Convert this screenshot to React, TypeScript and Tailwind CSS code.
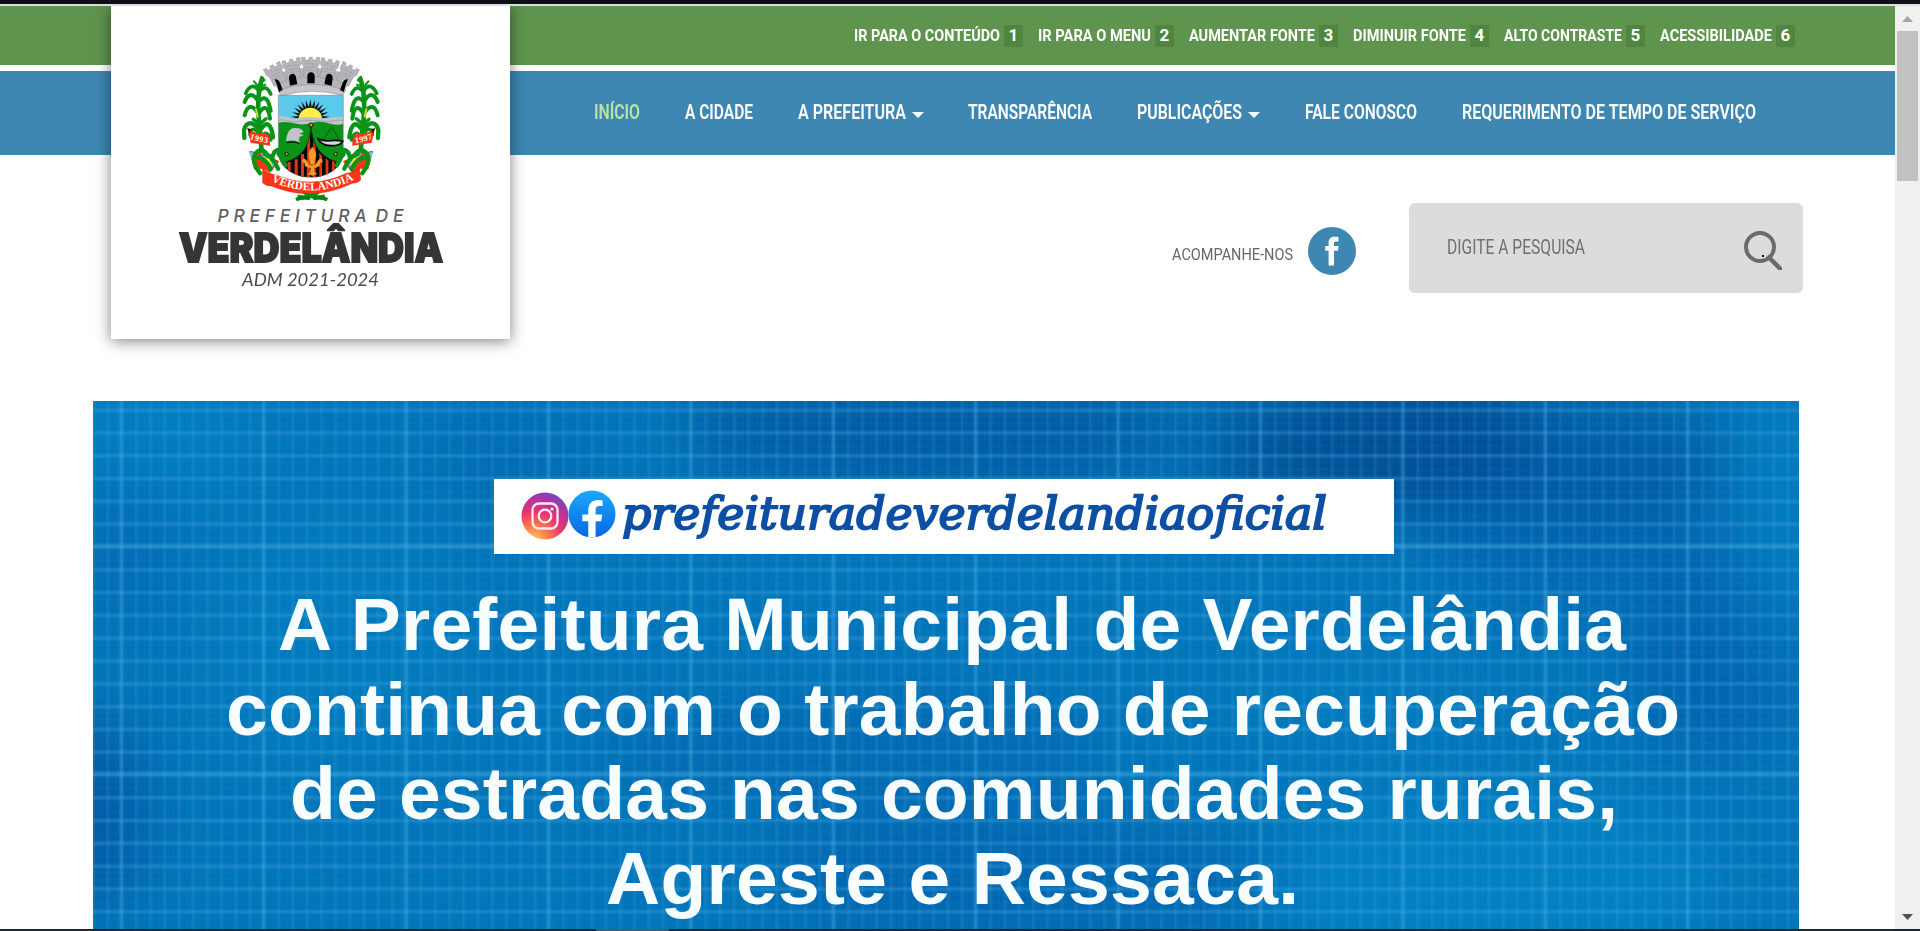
import { useLayoutEffect, useRef } from "react";

type FitProps = { text: string; className: string; mode?: "scale" | "track" };

/** One line of text fitted to the width of its box, by condensing or by tracking. */
function Fit({ text, className, mode = "scale" }: FitProps) {
  const outer = useRef<HTMLSpanElement>(null);
  const inner = useRef<HTMLSpanElement>(null);
  useLayoutEffect(() => {
    const o = outer.current;
    const i = inner.current;
    if (!o || !i) return;
    i.style.transform = "none";
    i.style.letterSpacing = "0px";
    const natural = i.getBoundingClientRect().width;
    const wanted = o.getBoundingClientRect().width;
    if (mode === "scale") i.style.transform = `scaleX(${wanted / natural})`;
    else i.style.letterSpacing = `${(wanted - natural) / (text.length - 1)}px`;
  }, [text, mode]);
  return (
    <span ref={outer} className={`block shrink-0 whitespace-nowrap ${className}`}>
      <span ref={inner} className="inline-block origin-left">
        {text}
      </span>
    </span>
  );
}

const shortcuts = [
  { label: "IR PARA O CONTEÚDO", key: "1", w: "w-[146px]" },
  { label: "IR PARA O MENU", key: "2", w: "w-[113px]" },
  { label: "AUMENTAR FONTE", key: "3", w: "w-[126px]" },
  { label: "DIMINUIR FONTE", key: "4", w: "w-[113px]" },
  { label: "ALTO CONTRASTE", key: "5", w: "w-[118px]" },
  { label: "ACESSIBILIDADE", key: "6", w: "w-[112px]" },
];

const menu = [
  { label: "INÍCIO", w: "w-[46px]", active: true },
  { label: "A CIDADE", w: "w-[68px]" },
  { label: "A PREFEITURA", w: "w-[108px]", caret: true },
  { label: "TRANSPARÊNCIA", w: "w-[124px]" },
  { label: "PUBLICAÇÕES", w: "w-[105px]", caret: true },
  { label: "FALE CONOSCO", w: "w-[112px]" },
  { label: "REQUERIMENTO DE TEMPO DE SERVIÇO", w: "w-[294px]" },
];

function TopBar() {
  return (
    <div className="flex h-[59px] items-center justify-end gap-[15px] bg-[#5e944d] pt-px pr-[100px] text-[17px] font-bold text-white">
      {shortcuts.map((s) => (
        <a key={s.key} className="flex items-center gap-1">
          <Fit text={s.label} className={s.w} />
          <span className="flex h-[22px] w-[19px] items-center justify-center bg-[#508540]">{s.key}</span>
        </a>
      ))}
    </div>
  );
}

function MainMenu() {
  return (
    <nav className="flex h-[84px] items-center gap-[44.8px] bg-[#3d87b2] pb-px pl-[594px] text-[19.5px] font-semibold text-white">
      {menu.map((m) => (
        <a key={m.label} className={m.active ? "flex items-center text-[#b9e4a3]" : "flex items-center"}>
          <Fit text={m.label} className={m.w} />
          {m.caret && (
            <svg viewBox="0 0 12 6" className="mt-[5px] ml-[6px] h-[6px] w-[12px]">
              <path d="M0 0h12L6 6z" fill="#fff" />
            </svg>
          )}
        </a>
      ))}
    </nav>
  );
}

function Stalk() {
  return (
    <g fill="none" stroke="#0a9417" strokeLinecap="round" strokeLinejoin="round">
      <path d="M96 116C84 150 82 200 88 255S92 320 98 350" strokeWidth="14" />
      <path d="M86 152C72 130 58 138 47 160M90 152C104 136 114 144 122 162" strokeWidth="11" />
      <path d="M82 180C66 156 52 164 44 186M86 184C108 162 116 182 122 212" strokeWidth="12" />
      <path d="M82 216C64 190 50 200 44 226M88 218C104 192 116 204 120 236" strokeWidth="12" />
      <path d="M84 266C66 242 48 246 42 270L43 294M92 268C110 240 124 252 129 292" strokeWidth="13" />
      <path d="M88 287C76 260 62 264 60 284M96 290C106 272 118 282 122 300" strokeWidth="11" />
      <path d="M84 250L70 238M92 250L108 236" strokeWidth="10" />
      <path d="M82 136l-10-12M92 126l12-6M90 140l16-6M96 116l-2-6" strokeWidth="6" />
      <path d="M78 208l5 22" stroke="#c9d83c" strokeWidth="6" />
    </g>
  );
}

function LowerLeaves() {
  return (
    <g>
      <path d="M58 332L98 340 148 364 120 398 98 386 72 388z" fill="#ff3415" />
      <path d="M56 334l14 4 10 20-16-4zM92 338l36 4 8 32-20 16z" fill="#5fc5ea" />
      <path d="M102 344l18 12 6 20-12-2z" fill="#ffe23a" />
      <path
        d="M90 400C68 370 66 348 84 334 96 326 108 334 112 348M104 342C128 348 138 372 144 386M126 358C130 336 136 328 148 330M80 352C98 354 114 366 122 388M146 342C158 352 158 366 167 376"
        fill="none"
        stroke="#0a9417"
        strokeWidth="13"
        strokeLinecap="round"
      />
    </g>
  );
}

const rays = [-84, -70, -56, -42, -28, -14, 0, 14, 28, 42, 56, 70, 84];
const towers = [
  { x: 132, y: 92, r: -27 },
  { x: 186, y: 75, r: -12 },
  { x: 242, y: 69, r: 0 },
  { x: 298, y: 75, r: 12 },
  { x: 356, y: 92, r: 27 },
];

function CoatOfArms() {
  return (
    <svg viewBox="0 0 480 492" className="mt-[34px] -ml-[2px] h-[164px] w-[160px] shrink-0">
      <defs>
        <clipPath id="shield">
          <path d="M145 166H340V345C332 385 292 412 243 412S153 385 145 345z" />
        </clipPath>
        <path id="nameArc" d="M118 421Q247 483 376 417" />
        <path id="yearLeft" d="M56 296Q84 306 118 310" />
        <path id="yearRight" d="M376 310Q405 306 432 294" />
      </defs>

      <path d="M120 108Q243 58 368 108L338 164Q243 138 154 166z" fill="#b5b5bb" />
      {towers.map((t) => (
        <g key={t.x} transform={`translate(${t.x} ${t.y}) rotate(${t.r})`}>
          <path d="M-27-17h10v8h12v-8h10v8h12v-8h10v19l-6 8V42h-42V10l-6-8z" fill="#b5b5bb" stroke="#8d8d95" strokeWidth="1.5" />
          <path d="M-18 2h36M-14 12h28M-18 22h36M-8-6v8M8 2v10M-4 12v10" stroke="#8d8d95" strokeWidth="1.5" strokeDasharray="5 3" />
        </g>
      ))}
      <path d="M145 150Q243 116 347 150L338 166Q243 140 152 168z" fill="#c5c5ca" stroke="#8d8d95" strokeWidth="2" />
      <g fill="#000">
        <path d="M134 118q10-2 16 10l8 22-11 6q-6-24-13-38z" />
        <path d="M180 137l-3-23q0-10 8-12t12 6l5 24z" />
        <path d="M232 130v-22q1-11 11-11t11 11v22z" />
        <path d="M305 137l3-23q0-10-8-12t-12 6l-5 24z" />
        <path d="M354 118q-10-2-16 10l-8 22 11 6q6-24 13-38z" />
      </g>

      <g clipPath="url(#shield)">
        <rect x="140" y="160" width="210" height="260" fill="#5bcaea" />
        {rays.map((a) => (
          <path key={a} d="M-5-30L0-58 5-30z" fill="#111" transform={`translate(241 236) rotate(${a})`} />
        ))}
        <circle cx="241" cy="238" r="35" fill="#fff04a" />
        <path d="M140 232q16-6 32 0t34 2 36-3 36 3 34-2 32 0v30H140z" fill="#c3c3c9" />
        <path d="M140 242q16-6 32 0t34 2 36-3 36 3 34-2 32 0" fill="none" stroke="#92929b" strokeWidth="2" />
        <path d="M140 249q26-6 52 1t52-1 52 1 52-1v175H140z" fill="#0a9417" />
        <path d="M243 256C240 320 212 362 150 368V420H340V368C278 362 248 320 243 256z" fill="#0a0a0a" />
        <path
          d="M173 366h9v50h-9zM194 358h9v60h-9zM213 342h9v76h-9zM232 312l8-30v134h-10zM250 300l7 20v96h-9zM268 338l8 10v70h-8zM287 356l8 4v56h-8zM306 364h8v50h-8z"
          fill="#e8321b"
        />
        <path d="M243 256C240 320 212 362 150 368M243 256C246 320 278 362 340 368" fill="none" stroke="#063d0a" strokeWidth="2" />
      </g>
      <path d="M145 166H340V345C332 385 292 412 243 412S153 385 145 345z" fill="none" stroke="#666" strokeWidth="1.5" />
      <circle cx="243" cy="255" r="6" fill="#d9a21b" stroke="#111" strokeWidth="3" />
      <circle cx="170" cy="342" r="5" fill="#c7b42a" stroke="#111" strokeWidth="3" />
      <circle cx="317" cy="342" r="5" fill="#c7b42a" stroke="#111" strokeWidth="3" />

      <path d="M168 304Q172 262 196 264 216 264 221 276L208 281 222 285 210 290Q204 296 210 308 192 298 168 304z" fill="#c3c3c9" />
      <path d="M170 308q20-6 38 2" fill="none" stroke="#111" strokeWidth="4" />
      <path d="M305 260L278 302M305 260L328 300" stroke="#12350f" strokeWidth="2" />
      <path d="M264 296q16 8 38 6t36 2q-8 14-36 13-30-1-38-21z" fill="#d7d7db" stroke="#000" strokeWidth="5" />

      <g fill="#f79a26">
        <path d="M247 320q16 18 10 34-4 10-4 20h-12q0-10-4-20-6-16 10-34z" />
        <path d="M238 374Q218 340 216 368q6-6 8 4-2 10 16 10zM256 374Q276 340 278 368q-6-6-8 4 2 10-16 10z" />
        <path d="M234 376h26v7h-26zM242 383h10l2 14 8 4-15 6-14-6 7-4z" />
      </g>

      <Stalk />
      <g transform="translate(487 0) scale(-1 1)">
        <Stalk />
      </g>
      <LowerLeaves />
      <g transform="translate(487 0) scale(-1 1)">
        <LowerLeaves />
      </g>
      <path d="M52 264Q78 286 104 278 122 282 120 318L112 316Q84 312 62 308z" fill="#ff3415" />
      <path d="M435 264Q409 286 383 278 365 282 367 318L375 316Q403 312 425 308z" fill="#ff3415" />
      <path d="M52 264l12 4-6 14zM435 264l-12 4 6 14z" fill="#3b0d0d" />

      <path d="M202 470Q243 480 276 444M285 470Q243 480 210 444" fill="none" stroke="#0a9417" strokeWidth="13" />
      <path d="M198 479q18-9 42-4M292 479q-18-9-42-4" fill="none" stroke="#078012" strokeWidth="11" />
      <path d="M98 384Q108 400 136 404 244 450 350 400 378 396 388 382L392 420Q382 430 366 430 246 488 124 438 108 438 98 428z" fill="#ff3415" stroke="#c5240d" strokeWidth="1.5" />

      <g fill="#fff" fontFamily="'Liberation Serif', serif" fontWeight="bold">
        <text fontSize="35">
          <textPath href="#nameArc" textLength="258" lengthAdjust="spacingAndGlyphs" startOffset="6">
            VERDELÂNDIA
          </textPath>
        </text>
        <text fontSize="25">
          <textPath href="#yearLeft" textLength="56" startOffset="3">1993</textPath>
        </text>
        <text fontSize="25">
          <textPath href="#yearRight" textLength="54">1997</textPath>
        </text>
      </g>
    </svg>
  );
}

function LogoCard() {
  return (
    <div className="absolute top-0 left-[111px] flex h-[333px] w-[399px] flex-col items-center bg-white shadow-[0_2px_14px_rgba(0,0,0,0.5)]">
      <CoatOfArms />
      <Fit
        text="PREFEITURA DE"
        mode="track"
        className="mt-[2px] w-[186px] font-['Inter',sans-serif] text-[17.5px] leading-[19px] font-medium text-[#606060] italic [word-spacing:-5px]"
      />
      <Fit
        text="VERDELÂNDIA"
        className="mt-[3px] w-[264px] font-['Inter',sans-serif] text-[40px] leading-[40px] font-black text-[#373435] [-webkit-text-stroke:1.8px_#373435]"
      />
      <Fit text="ADM 2021-2024" className="mt-[1px] w-[137px] font-['Lato',sans-serif] text-[18px] leading-[20px] text-[#4a4a4a] italic" />
    </div>
  );
}

function FacebookBadge() {
  return (
    <svg viewBox="0 0 48 48" className="h-12 w-12">
      <circle cx="24" cy="24" r="24" fill="#3d87b2" />
      <path d="M20.600 38.600V23.800h-3.400v-4.900h3.400v-3.200c0-3.900 2.300-5.900 5.900-5.900h4v4.700h-2.600c-1.500 0-1.900.7-1.900 2v2.400h4.500l-.5 4.900h-4v14.800z" fill="#fff" />
    </svg>
  );
}

function SearchRow() {
  return (
    <div className="flex h-[246px] items-start pt-[48px] pl-[1172px]">
      <div className="flex items-center gap-[15px] pt-6">
        <Fit text="ACOMPANHE-NOS" className="mt-[6px] w-[121px] text-[17px] leading-5 text-[#666]" />
        <FacebookBadge />
      </div>
      <label className="ml-[53px] flex h-[90px] w-[394px] items-center justify-between rounded-[6px] bg-[#dddbdc] pr-[21px] pl-[38px]">
        <Fit text="DIGITE A PESQUISA" className="w-[138px] text-[19.5px] text-[#707070]" />
        <svg viewBox="0 0 38 39" className="mt-[4px] h-[39px] w-[38px]" fill="none" stroke="#6b6b6b">
          <circle cx="16" cy="16" r="14" strokeWidth="4" />
          <path d="M25 26.500L36 37.500" strokeWidth="4.500" strokeLinecap="round" />
          <path d="M18 24h2v2h-2z" fill="#111" stroke="none" />
        </svg>
      </label>
    </div>
  );
}

const blotches = [
  { x: 420, y: 60, rx: 90, ry: 60, c: "#0a62ab", o: 0.5 },
  { x: 840, y: 30, rx: 260, ry: 60, c: "#004a95", o: 0.65 },
  { x: 1170, y: 50, rx: 60, ry: 70, c: "#003f86", o: 0.6 },
  { x: 1320, y: 40, rx: 130, ry: 80, c: "#003f86", o: 0.75 },
  { x: 1480, y: 60, rx: 160, ry: 70, c: "#004a95", o: 0.6 },
  { x: 30, y: 140, rx: 40, ry: 90, c: "#0460ad", o: 0.6 },
  { x: 0, y: 410, rx: 60, ry: 100, c: "#004f9f", o: 0.75 },
  { x: 760, y: 350, rx: 260, ry: 60, c: "#0457a6", o: 0.4 },
  { x: 920, y: 480, rx: 260, ry: 70, c: "#0457a6", o: 0.5 },
  { x: 1620, y: 260, rx: 90, ry: 110, c: "#0457a6", o: 0.55 },
  { x: 1480, y: 130, rx: 150, ry: 80, c: "#0457a6", o: 0.45 },
  { x: 60, y: 30, rx: 100, ry: 70, c: "#1492d2", o: 0.3 },
  { x: 240, y: 250, rx: 120, ry: 120, c: "#0a88c8", o: 0.3 },
  { x: 1400, y: 480, rx: 220, ry: 90, c: "#0a90d0", o: 0.4 },
  { x: 1685, y: 120, rx: 30, ry: 160, c: "#1492d2", o: 0.3 },
  { x: 1260, y: 300, rx: 120, ry: 40, c: "#1288c6", o: 0.3 },
];

function Blueprint() {
  return (
    <svg viewBox="0 0 1706 528" className="absolute inset-0 h-[528px] w-[1706px]">
      <defs>
        <filter id="haze" x="0" y="0" width="1706" height="528" filterUnits="userSpaceOnUse">
          <feGaussianBlur stdDeviation="30" />
        </filter>
        <filter id="soft">
          <feGaussianBlur stdDeviation="0.9" />
        </filter>
        <pattern id="minor" width="14.240" height="22.800" patternUnits="userSpaceOnUse" x="-0.500" y="7.500">
          <path d="M0.500 0V23" stroke="#43a6e0" strokeOpacity=".42" strokeWidth="2.400" />
          <path d="M5 0V23M9.500 0V23" stroke="#2391d2" strokeOpacity=".18" strokeWidth="1.500" />
          <path d="M0 1.700H15" stroke="#43a6e0" strokeOpacity=".42" strokeWidth="3" />
          <path d="M0 8H15M0 15H15" stroke="#2391d2" strokeOpacity=".12" strokeWidth="2" />
        </pattern>
        <pattern id="major" width="142.400" height="228" patternUnits="userSpaceOnUse" x="26.500" y="142.500">
          <path d="M1.500 0V228" stroke="#4db4ea" strokeOpacity=".36" strokeWidth="3" />
          <path d="M0 2H143" stroke="#4db4ea" strokeOpacity=".3" strokeWidth="4" />
        </pattern>
      </defs>
      <rect width="1706" height="528" fill="#0073b8" />
      <g filter="url(#haze)">
        <rect x="-100" y="-100" width="1906" height="728" fill="#0073b8" />
        {blotches.map((b, i) => (
          <ellipse key={i} cx={b.x} cy={b.y} rx={b.rx} ry={b.ry} fill={b.c} opacity={b.o} />
        ))}
      </g>
      <g filter="url(#soft)">
        <rect x="-20" y="-20" width="1746" height="568" fill="url(#minor)" />
        <rect x="-20" y="-20" width="1746" height="568" fill="url(#major)" />
      </g>
    </svg>
  );
}

function InstagramIcon() {
  return (
    <svg viewBox="0 0 48 48" className="mt-[2px] h-12 w-12">
      <defs>
        <radialGradient id="ig" cx="0.250" cy="1.050" r="1.150">
          <stop offset="0" stopColor="#ffd45a" />
          <stop offset="0.300" stopColor="#fb7a4a" />
          <stop offset="0.550" stopColor="#e5386d" />
          <stop offset="0.780" stopColor="#b434a0" />
          <stop offset="1" stopColor="#6a45c8" />
        </radialGradient>
      </defs>
      <circle cx="24" cy="24" r="23.500" fill="url(#ig)" />
      <g fill="none" stroke="#ffe9ee" strokeWidth="2.300">
        <rect x="11.500" y="11.500" width="25" height="25" rx="6.500" />
        <circle cx="24" cy="24" r="6.300" />
      </g>
      <circle cx="31" cy="17" r="1.600" fill="#ffe9ee" />
    </svg>
  );
}

function FacebookIcon() {
  return (
    <svg viewBox="0 0 48 48" className="-ml-px h-12 w-12">
      <defs>
        <linearGradient id="fb" x1="0" y1="0" x2="0" y2="1">
          <stop offset="0" stopColor="#1aa9fb" />
          <stop offset="1" stopColor="#0766e4" />
        </linearGradient>
      </defs>
      <circle cx="24" cy="24" r="23.500" fill="url(#fb)" />
      <path d="M20.300 47.200V31.200h-6v-6.600h6v-4.400c0-6.600 3.700-10.200 9.700-10.200 2 0 4.600.3 4.600.3v5.800h-3c-3.200 0-4 1.900-4 3.900v4.600h6.700l-1.100 6.600h-5.600v16z" fill="#fff" />
    </svg>
  );
}

function Banner() {
  return (
    <section className="relative ml-[93px] h-[528px] w-[1706px] overflow-hidden">
      <Blueprint />
      <div className="relative flex flex-col items-start pt-[78px]">
        <div className="ml-[401px] flex h-[75px] w-[900px] items-start bg-white pt-[11px] pl-[27px]">
          <InstagramIcon />
          <FacebookIcon />
          <Fit
            text="prefeituradeverdelandiaoficial"
            className="ml-[6px] w-[705px] font-['DejaVu_Serif',serif] text-[44px] leading-[48px] text-[#0d4fa3] italic [-webkit-text-stroke:2px_#0d4fa3]"
          />
        </div>
        <h1 className="mt-[28px] flex flex-col font-['Liberation_Sans',sans-serif] text-[75px] leading-[84.500px] font-bold text-[#f8fdff]">
          <Fit mode="track" text="A Prefeitura Municipal de Verdelândia" className="ml-[185px] w-[1348px]" />
          <Fit mode="track" text="continua com o trabalho de recuperação" className="ml-[133px] w-[1454px]" />
          <Fit mode="track" text="de estradas nas comunidades rurais," className="ml-[197px] w-[1328px]" />
          <Fit mode="track" text="Agreste e Ressaca." className="ml-[513px] w-[693px]" />
        </h1>
      </div>
    </section>
  );
}

function Scrollbar() {
  return (
    <div className="flex w-[25px] shrink-0 flex-col items-center bg-[#f0f0f0]">
      <svg viewBox="0 0 11 6" className="mt-[10px] h-[6px] w-[11px]">
        <path d="M0 6L5.500 0 11 6z" fill="#a3a3a3" />
      </svg>
      <div className="mt-[9px] h-[150px] w-[21px] bg-[#c1c1c1]" />
      <svg viewBox="0 0 11 6" className="mt-auto mb-[9px] h-[6px] w-[11px]">
        <path d="M0 0h11L5.500 6z" fill="#505050" />
      </svg>
    </div>
  );
}

export default function App() {
  return (
    <div className="flex h-[931px] w-[1920px] flex-col overflow-hidden bg-white font-['Roboto',sans-serif]">
      <div className="h-1 shrink-0 bg-[#0e0f14]" />
      <div className="h-0.5 shrink-0 bg-[#dcdedc]" />
      <div className="flex h-[923px] shrink-0">
        <main className="relative w-[1895px] shrink-0 overflow-hidden">
          <TopBar />
          <div className="h-[6px]" />
          <MainMenu />
          <LogoCard />
          <SearchRow />
          <Banner />
        </main>
        <Scrollbar />
      </div>
      <div className="flex h-0.5 shrink-0 bg-[#20262e] pl-[596px]">
        <div className="w-[73px] bg-[#525860]" />
      </div>
    </div>
  );
}
